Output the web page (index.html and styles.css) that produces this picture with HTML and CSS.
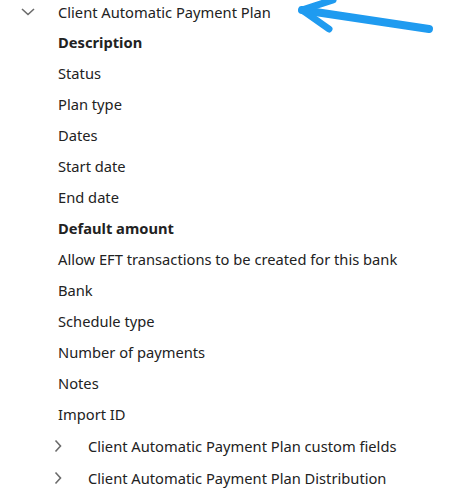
FILE: index.html
```html
<!DOCTYPE html>
<html>
<head>
<meta charset="UTF-8">
<title>Client Automatic Payment Plan</title>
<link rel="stylesheet" href="styles.css">
</head>
<body>
<div class="tree">
	<div class="node open">
		<div class="row head">
			<span class="caret">
				<svg width="14" height="8" viewBox="0 0 14 8"><path d="M1 1 L7 6.5 L13 1" fill="none" stroke="#6b6b6b" stroke-width="1.6"/></svg>
			</span>
			<span class="label">Client Automatic Payment Plan</span>
		</div>
		<ul class="fields">
			<li class="bold">Description</li>
			<li>Status</li>
			<li>Plan type</li>
			<li>Dates</li>
			<li>Start date</li>
			<li>End date</li>
			<li class="bold">Default amount</li>
			<li>Allow EFT transactions to be created for this bank</li>
			<li>Bank</li>
			<li>Schedule type</li>
			<li>Number of payments</li>
			<li>Notes</li>
			<li>Import ID</li>
		</ul>
		<div class="row sub">
			<span class="caret">
				<svg width="8" height="14" viewBox="0 0 8 14"><path d="M1.5 1.5 L6.5 7 L1.5 12.5" fill="none" stroke="#6b6b6b" stroke-width="1.6"/></svg>
			</span>
			<span class="label">Client Automatic Payment Plan custom fields</span>
		</div>
		<div class="row sub">
			<span class="caret">
				<svg width="8" height="14" viewBox="0 0 8 14"><path d="M1.5 1.5 L6.5 7 L1.5 12.5" fill="none" stroke="#6b6b6b" stroke-width="1.6"/></svg>
			</span>
			<span class="label">Client Automatic Payment Plan Distribution</span>
		</div>
	</div>
	<!-- callout arrow pointing at the section title -->
	<svg class="pointer" width="150" height="40" viewBox="0 0 150 40">
		<path d="M139 33 L12 14" fill="none" stroke="#1f9bf0" stroke-width="8" stroke-linecap="round"/>
		<path d="M43 4 L12 14 L39 33" fill="none" stroke="#1f9bf0" stroke-width="7" stroke-linecap="round" stroke-linejoin="round"/>
	</svg>
</div>
</body>
</html>
```

FILE: styles.css
```css
body {
	margin: 0;
	padding: 0;
	background: #fff;
	font-family: "Noto Sans", "Open Sans", sans-serif;
	font-size: 14.7px;
	color: #222;
}

.tree {
	position: relative;
	height: 499px;
}

.row {
	display: flex;
	align-items: center;
	height: 31px;
}

.head {
	margin-top: -4px;
	padding-left: 21px;
}

.head .caret {
	width: 37px;
	display: flex;
}

.fields {
	margin: 0;
	padding: 0 0 0 58px;
	list-style: none;
}

.fields li {
	height: 31px;
	line-height: 31px;
}

.fields li.bold {
	font-weight: bold;
}

.sub {
	padding-left: 54px;
	height: 32px;
}

.sub .caret {
	width: 34px;
	display: flex;
}

.pointer {
	position: absolute;
	left: 290px;
	top: 0;
}
```
